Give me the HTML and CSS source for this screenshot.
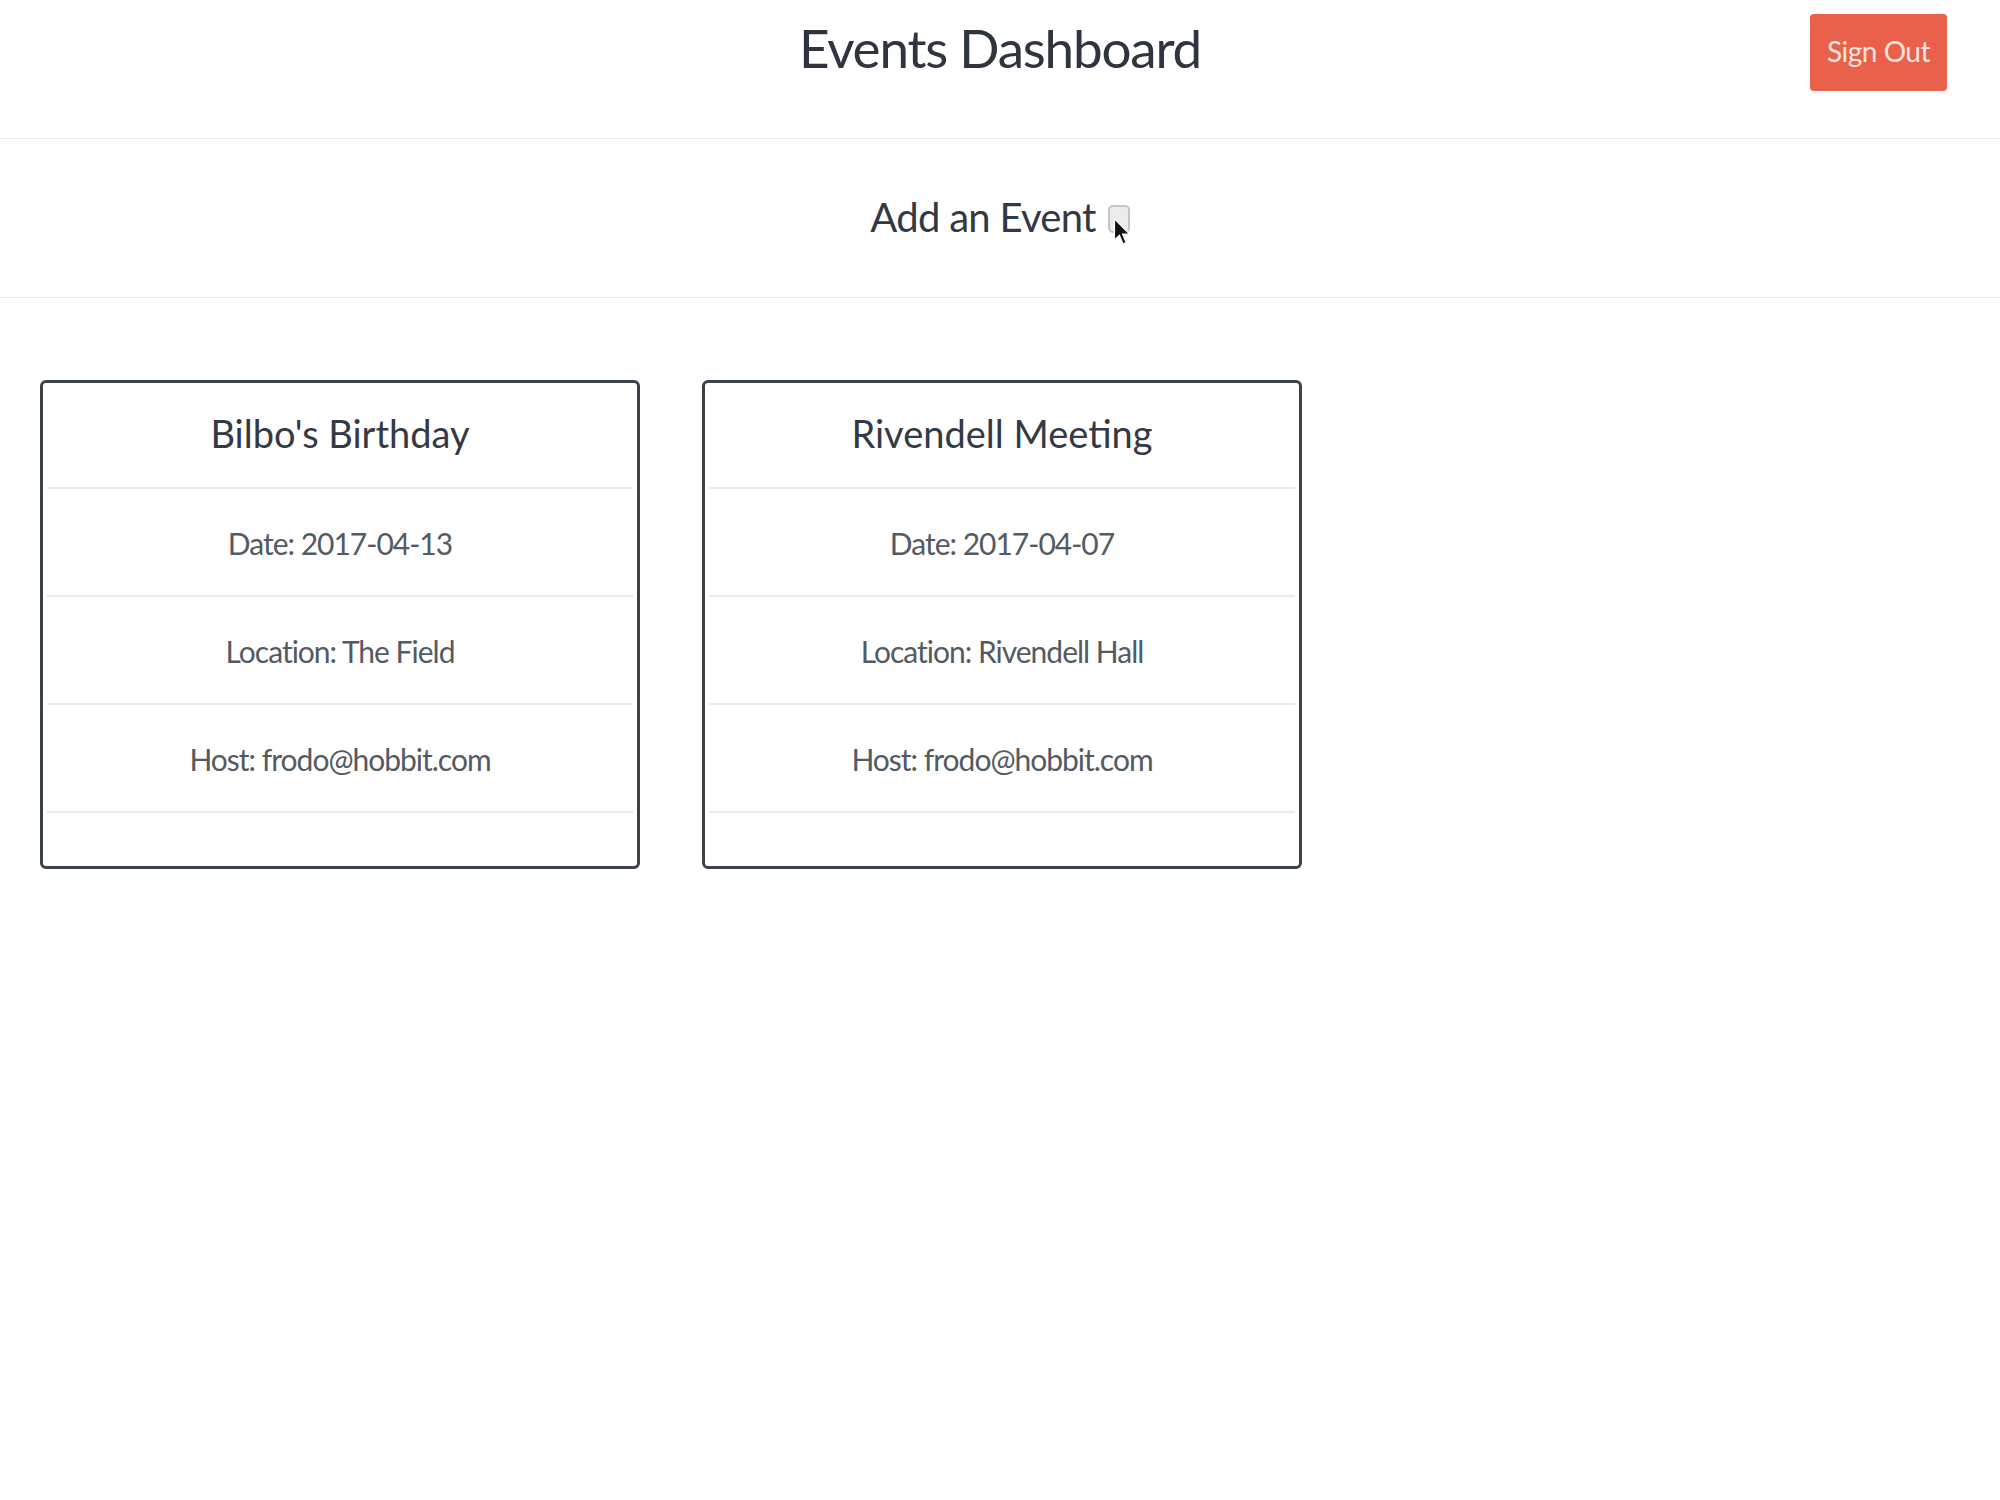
FILE: index.html
```html
<!DOCTYPE html>
<html lang="en">
<head>
<meta charset="utf-8">
<title>Events Dashboard</title>
<link rel="stylesheet" href="styles.css">
</head>
<body>
<header class="topbar">
  <div class="topbar-spacer"></div>
  <h1 class="page-title">Events Dashboard</h1>
  <div class="topbar-actions">
    <button class="btn-signout" type="button">Sign Out</button>
  </div>
</header>

<section class="add-event">
  <label class="add-event-label">
    <span class="add-event-text">Add an Event</span>
    <span class="checkbox-wrap">
      <span class="checkbox"></span>
      <svg class="cursor" width="18" height="30" viewBox="0 0 13 21" aria-hidden="true">
        <path d="M1 1 L1 16.5 L4.6 13 L7.2 19.2 L9.6 18.2 L7 12 L12 12 Z" fill="#111" stroke="#fff" stroke-width="1"/>
      </svg>
    </span>
  </label>
</section>

<main class="events">
  <article class="event-card">
    <h2 class="event-title">Bilbo's Birthday</h2>
    <ul class="event-list">
      <li class="event-row">Date: 2017-04-13</li>
      <li class="event-row">Location: The Field</li>
      <li class="event-row">Host: frodo@hobbit.com</li>
      <li class="event-foot"></li>
    </ul>
  </article>
  <article class="event-card">
    <h2 class="event-title">Rivendell Meeting</h2>
    <ul class="event-list">
      <li class="event-row">Date: 2017-04-07</li>
      <li class="event-row">Location: Rivendell Hall</li>
      <li class="event-row">Host: frodo@hobbit.com</li>
      <li class="event-foot"></li>
    </ul>
  </article>
</main>
</body>
</html>
```

FILE: styles.css
```css
* {
  box-sizing: border-box;
}

html, body {
  margin: 0;
  padding: 0;
  background: #ffffff;
}

body {
  font-family: Lato, "Liberation Sans", Arial, sans-serif;
  color: #333a44;
}

.topbar {
  display: grid;
  grid-template-columns: 1fr auto 1fr;
  align-items: start;
  height: 139px;
  border-bottom: 1px solid #ebebeb;
}

.page-title {
  margin: 21px 0 0 0;
  font-weight: 400;
  font-size: 53px;
  letter-spacing: -1.2px;
  line-height: 1;
  color: #2e3440;
}

.topbar-actions {
  display: flex;
  justify-content: flex-end;
  padding-right: 53px;
  padding-top: 14px;
}

.btn-signout {
  width: 137px;
  height: 77px;
  border: none;
  border-radius: 4px;
  background: #e9604b;
  color: #fde6df;
  font-family: Lato, "Liberation Sans", sans-serif;
  font-size: 28px;
  letter-spacing: -0.5px;
  line-height: 1;
  padding: 0 0 4px 0;
  display: flex;
  align-items: center;
  justify-content: center;
}

.add-event {
  display: flex;
  justify-content: center;
  padding: 58px 0 60px 0;
  border-bottom: 1px solid #ebebeb;
}

.add-event-label {
  display: flex;
  align-items: flex-start;
  gap: 12px;
}

.add-event-text {
  font-size: 40px;
  letter-spacing: -0.7px;
  line-height: 1;
  color: #333944;
}

.checkbox-wrap {
  position: relative;
  margin-top: 8px;
  width: 22px;
  height: 28px;
}

.checkbox {
  display: block;
  width: 22px;
  height: 28px;
  border: 2px solid #c4c4c4;
  border-radius: 5px;
  background: #ececec;
}

.cursor {
  position: absolute;
  left: 5px;
  top: 12px;
}

.events {
  display: flex;
  gap: 62px;
  padding-left: 40px;
  margin-top: 82px;
}

.event-card {
  width: 600px;
  border: 3px solid #3c424b;
  border-radius: 6px;
  background: #fff;
}

.event-title {
  margin: 0;
  padding: 31px 0 35px 0;
  text-align: center;
  font-weight: 400;
  font-size: 38px;
  line-height: 1;
  color: #333a45;
}

.event-list {
  list-style: none;
  margin: 0 4px;
  padding: 0;
}

.event-row {
  border-top: 2px solid #ebebeb;
  padding: 39px 0 37px 0;
  text-align: center;
  font-size: 30px;
  letter-spacing: -1px;
  line-height: 1;
  color: #545a62;
}

.event-foot {
  border-top: 2px solid #ebebeb;
  height: 55px;
}
```
